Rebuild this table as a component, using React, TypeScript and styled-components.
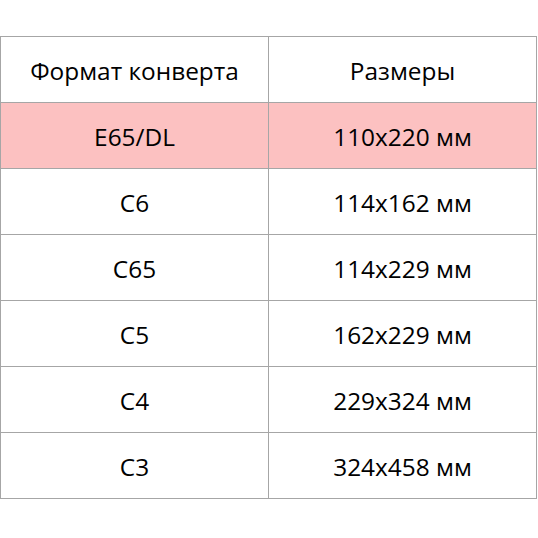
import React from "react";
import styled, { createGlobalStyle } from "styled-components";

const GlobalStyle = createGlobalStyle`
  html, body {
    margin: 0;
    padding: 0;
    background: #ffffff;
  }
  body {
    font-family: "Open Sans", "Liberation Sans", sans-serif;
    color: #000000;
  }
`;

const Page = styled.div`
  width: 538px;
  height: 538px;
  padding-top: 36px;
  box-sizing: border-box;
`;

const Table = styled.table`
  width: 537px;
  border-collapse: collapse;
  table-layout: fixed;
`;

const Row = styled.tr<{ $highlight?: boolean }>`
  height: 66px;
  background: ${(p) => (p.$highlight ? "#fcc1c1" : "#ffffff")};
`;

const Cell = styled.td`
  border: 1.5px solid #a6a6a6;
  text-align: center;
  vertical-align: middle;
  font-size: 24.4px;
  padding: 0;
  padding-top: 1px;
  &:first-child {
    width: 267px;
  }
`;

const rows = [
  ["E65/DL", "110x220 мм"],
  ["C6", "114x162 мм"],
  ["C65", "114x229 мм"],
  ["C5", "162x229 мм"],
  ["C4", "229x324 мм"],
  ["C3", "324x458 мм"],
];

const App = () => {
  return (
    <>
      <GlobalStyle />
      <Page>
        <Table>
          <tbody>
            <Row>
              <Cell>Формат конверта</Cell>
              <Cell>Размеры</Cell>
            </Row>
            {rows.map(([format, size], i) => (
              <Row key={format} $highlight={i === 0}>
                <Cell>{format}</Cell>
                <Cell>{size}</Cell>
              </Row>
            ))}
          </tbody>
        </Table>
      </Page>
    </>
  );
};

export default App;
